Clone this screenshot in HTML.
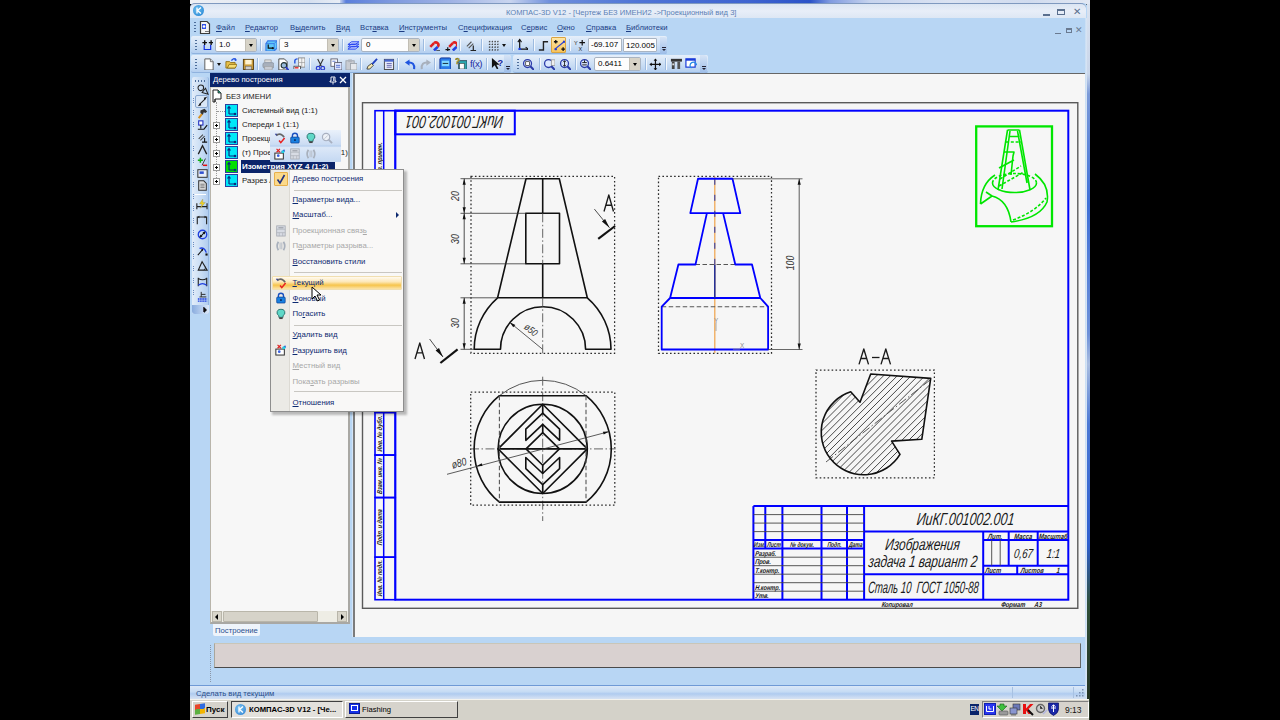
<!DOCTYPE html>
<html><head><meta charset="utf-8">
<style>
*{margin:0;padding:0;box-sizing:border-box}
html,body{width:1280px;height:720px;overflow:hidden;background:#000}
body{position:relative;font-family:"Liberation Sans",sans-serif;font-size:7.7px;color:#000}
.a{position:absolute}
.t{position:absolute;white-space:nowrap;line-height:1}
.tb{position:absolute;border-radius:2px;background:linear-gradient(#e6effa,#c9ddf4 60%,#b4cff0);border-bottom:1px solid #8fb2de}
.sep{position:absolute;width:2px;background:#9dbbe0;border-right:1px solid #f4f8fd}
.grip{position:absolute;width:2px;background:repeating-linear-gradient(#4d6d9a 0 1px,transparent 1px 3px)}
.combo{position:absolute;background:#fdfdfd;border:1px solid #a9b4c2;border-radius:2px}
.combo .btn{position:absolute;right:0;top:0;bottom:0;width:11px;background:#d7d3c7;border-left:1px solid #c2beb4}
.combo .btn:after{content:"";position:absolute;left:3px;top:5px;border:2.5px solid transparent;border-top:3px solid #000}
.menu{color:#1c3d84}
.ci{position:absolute;left:22px;white-space:nowrap;line-height:1;color:#0f2c72}
.cd{color:#a7a7a7}
.sepm{position:absolute;left:24px;right:4px;height:1px;background:#c5c5c5}
</style></head><body>
<!-- desktop strip top -->
<div class="a" style="left:190px;top:0;width:900px;height:4px;background:linear-gradient(90deg,#eef0f4 0px,#e4e9f2 60px,#d6e0f0 120px,#e8edf5 150px,#c8d4ee 150px,#5a7edc 156px,#7d98de 200px,#9fb2e4 260px,#c9d5ef 320px,#6f8fdc 360px,#4f74d6 450px,#3d63d0 560px,#2a52c8 620px,#7f9ae0 640px,#c7d4ee 680px,#dbe3f2 760px,#d0dbef 840px,#e2e8f3 900px)"></div>
<!-- window -->
<div class="a" style="left:190px;top:3px;width:898px;height:697px;background:#b8d6f4;border-radius:5px 5px 0 0"></div>
<!-- title bar -->
<div class="a" style="left:190px;top:3px;width:896px;height:15px;background:linear-gradient(#dbe5f3,#e8eef8 50%,#dde7f4);border-top:1px solid #7f99bf;border-radius:5px 5px 0 0"></div>
<div class="a" style="left:193px;top:5px;width:11px;height:11px;border-radius:50%;background:radial-gradient(circle at 40% 40%,#6fc0f0,#1d7ed0)"></div><svg class="a" style="left:193px;top:5px" width="11" height="11" viewBox="0 0 11 11"><path d="M4,2.5 V8.5 M8,2.5 L4.5,5.5 L8,8.5" stroke="#fff" stroke-width="1.3" fill="none"/></svg>
<div class="t" style="left:506px;top:8.5px;font-size:7.6px;color:#5b7fb5">КОМПАС-3D V12 - [Чертеж БЕЗ ИМЕНИ2 -&gt;Проекционный вид 3]</div>
<!-- right window border -->
<div class="a" style="left:1085px;top:18px;width:2px;height:681px;background:linear-gradient(90deg,#c6ddf5,#dbe6f3)"></div><div class="a" style="left:1087px;top:4px;width:3px;height:716px;background:linear-gradient(#d9e2f0 0,#c9d6ea 70px,#7b9ad8 90px,#3f6fd6 200px,#6d90d8 330px,#a9bde0 360px,#4b78d4 420px,#2f5fcf 540px,#30503a 600px,#1f2a1c 720px)"></div>
<!-- taskbar -->
<div class="a" style="left:190px;top:699px;width:899px;height:21px;background:#d4d2c9;border-top:1px solid #f4f3ee"></div>
<!-- menu bar -->
<div class="grip" style="left:194px;top:22px;height:12px"></div>
<svg class="a" style="left:199px;top:20px" width="12" height="15" viewBox="0 0 12 15"><path d="M1.5,1.5 H8 L10.5,4 V13.5 H1.5 Z" fill="#f4f4f4" stroke="#3a3a3a" stroke-width="1.2"/><path d="M3,4 H7 V9 H3 Z" fill="#3050e8"/><circle cx="5" cy="6.5" r="1.3" fill="#fff"/><path d="M6,11.5 H10" stroke="#777" stroke-width="1"/></svg>
<div class="t menu" style="left:216px;top:24px"><u>Ф</u>айл</div>
<div class="t menu" style="left:245px;top:24px"><u>Р</u>едактор</div>
<div class="t menu" style="left:290px;top:24px">В<u>ы</u>делить</div>
<div class="t menu" style="left:336px;top:24px"><u>В</u>ид</div>
<div class="t menu" style="left:360px;top:24px">Вст<u>а</u>вка</div>
<div class="t menu" style="left:399px;top:24px"><u>И</u>нструменты</div>
<div class="t menu" style="left:458px;top:24px">С<u>п</u>ецификация</div>
<div class="t menu" style="left:521px;top:24px">С<u>е</u>рвис</div>
<div class="t menu" style="left:557px;top:24px"><u>О</u>кно</div>
<div class="t menu" style="left:586px;top:24px"><u>С</u>правка</div>
<div class="t menu" style="left:626px;top:24px"><u>Б</u>иблиотеки</div>
<!-- title buttons -->
<div class="a" style="left:1043px;top:14px;width:7px;height:2px;background:#5a6f8e"></div>
<div class="a" style="left:1057px;top:9px;width:8px;height:6px;border:1px solid #5a6f8e;border-top-width:2px"></div>
<div class="t" style="left:1073px;top:7px;font-size:10px;color:#5a6f8e">✕</div>
<!-- mdi buttons -->
<div class="a" style="left:1055px;top:33px;width:6px;height:1px;background:#6a7a90"></div>
<div class="a" style="left:1066px;top:28px;width:6px;height:5px;border:1px solid #6a7a90;border-top-width:2px"></div>
<div class="t" style="left:1075px;top:26px;font-size:9px;color:#6a7a90">✕</div>
<!-- toolbar row 1 -->
<div class="tb" style="left:191px;top:36px;width:476px;height:18px"></div>
<div class="grip" style="left:195px;top:40px;height:11px"></div>
<div class="combo" style="left:215px;top:38px;width:42px;height:14px"><div class="btn"></div></div>
<div class="t" style="left:219px;top:41px;font-size:8px">1.0</div>
<div class="sep" style="left:260px;top:39px;height:12px"></div>
<div class="combo" style="left:279px;top:38px;width:60px;height:14px"><div class="btn"></div></div>
<div class="t" style="left:284px;top:41px;font-size:8px">3</div>
<div class="sep" style="left:342px;top:39px;height:12px"></div>
<div class="combo" style="left:361px;top:38px;width:59px;height:14px"><div class="btn"></div></div>
<div class="t" style="left:366px;top:41px;font-size:8px">0</div>
<div class="sep" style="left:423px;top:39px;height:12px"></div>
<div class="sep" style="left:459px;top:39px;height:12px"></div>
<div class="sep" style="left:481px;top:39px;height:12px"></div>
<div class="sep" style="left:512px;top:39px;height:12px"></div>
<div class="sep" style="left:533px;top:39px;height:12px"></div>
<div class="a" style="left:551px;top:37px;width:15px;height:16px;background:linear-gradient(#ffe7a8,#f8c45a);border:1px solid #d9a441;border-radius:1px"></div>
<div class="sep" style="left:569px;top:39px;height:12px"></div>
<div class="combo" style="left:588px;top:38px;width:34px;height:14px;border-radius:1px"></div>
<div class="t" style="left:591px;top:41px;font-size:8px">-69.107</div>
<div class="combo" style="left:623px;top:38px;width:34px;height:14px;border-radius:1px;overflow:hidden"><div class="t" style="left:2px;top:3px;font-size:8px">120.005</div></div>
<div class="a" style="left:660px;top:37px;width:7px;height:17px;background:linear-gradient(#d6e4f6,#9dbde8);border-radius:0 3px 3px 0"></div>
<!-- toolbar row 2 -->
<div class="tb" style="left:191px;top:55px;width:320px;height:18px"></div>
<div class="grip" style="left:195px;top:59px;height:11px"></div>
<div class="sep" style="left:257px;top:58px;height:12px"></div>
<div class="sep" style="left:309px;top:58px;height:12px"></div>
<div class="sep" style="left:360px;top:58px;height:12px"></div>
<div class="sep" style="left:397px;top:58px;height:12px"></div>
<div class="sep" style="left:434px;top:58px;height:12px"></div>
<div class="sep" style="left:486px;top:58px;height:12px"></div>
<div class="a" style="left:504px;top:55px;width:7px;height:18px;background:linear-gradient(#d6e4f6,#9dbde8);border-radius:0 3px 3px 0"></div>
<div class="tb" style="left:513px;top:55px;width:195px;height:18px"></div>
<div class="grip" style="left:517px;top:59px;height:11px"></div>
<div class="sep" style="left:539px;top:58px;height:12px"></div>
<div class="sep" style="left:575px;top:58px;height:12px"></div>
<div class="combo" style="left:594px;top:57px;width:47px;height:14px"><div class="btn"></div></div>
<div class="t" style="left:598px;top:60px;font-size:8px">0.6411</div>
<div class="sep" style="left:645px;top:58px;height:12px"></div>
<div class="sep" style="left:665px;top:58px;height:12px"></div>
<div class="a" style="left:700px;top:55px;width:7px;height:18px;background:linear-gradient(#d6e4f6,#9dbde8);border-radius:0 3px 3px 0"></div>
<!-- left vertical toolbar -->
<div class="a" style="left:192px;top:77px;width:17px;height:237px;border-radius:2px;background:linear-gradient(90deg,#e3edf9,#c7dcf4 60%,#b1cdef);border-right:1px solid #95b6e0"></div>
<div class="a" style="left:195px;top:80px;width:11px;height:2px;background:repeating-linear-gradient(90deg,#4d6d9a 0 1px,transparent 1px 3px)"></div>
<div class="a" style="left:195px;top:194px;width:11px;height:1px;background:#94b4dc;border-bottom:1px solid #fff"></div>
<div class="a" style="left:192px;top:305px;width:17px;height:9px;border-radius:0 0 2px 3px;background:linear-gradient(90deg,#8aacde,#b9d0ef 60%,#dde9f8)"></div>
<div class="a" style="left:202.5px;top:307px;width:1px;height:5px;background:#445"></div><div class="a" style="left:204px;top:306.5px;border:3px solid transparent;border-left:3.5px solid #111;border-right:0"></div>
<!-- tree panel -->
<div class="a" style="left:210px;top:73px;width:140px;height:13.5px;background:#0a246a"></div>
<div class="t" style="left:213px;top:76px;color:#fff">Дерево построения</div>
<svg class="a" style="left:329px;top:75.5px" width="8" height="9" viewBox="0 0 8 9"><path d="M2,1 H6 V5 H7 V6 H1 V5 H2 Z" stroke="#fff" stroke-width="0.9" fill="none"/><path d="M4,6 V8.5 M4.7,1.5 V5" stroke="#fff" stroke-width="0.9"/></svg>
<svg class="a" style="left:339px;top:75.5px" width="8" height="8" viewBox="0 0 8 8"><path d="M1,1 L7,7 M7,1 L1,7" stroke="#fff" stroke-width="1.3"/></svg>
<div class="a" style="left:210px;top:86.5px;width:140px;height:537px;background:#f7f7f7;border-right:2px solid #a9a8a4;border-bottom:2px solid #a9a8a4;border-left:1.5px solid #b9b5ab"></div>
<div class="a" style="left:211px;top:86.5px;width:137px;height:1.5px;background:#dedcd2"></div>
<!-- tree scrollbar -->
<div class="a" style="left:211px;top:611px;width:137px;height:11px;background:#eeede5"></div>
<div class="a" style="left:212px;top:611px;width:10px;height:11px;background:#d9d6cb;border:1px solid #b9b6aa"></div>
<div class="a" style="left:215px;top:613.5px;border:3px solid transparent;border-right:3px solid #000;border-left:0"></div>
<div class="a" style="left:223px;top:611px;width:95px;height:11px;background:#d6d3c9;border:1px solid #b9b6aa;border-radius:1px"></div>
<div class="a" style="left:337px;top:611px;width:10px;height:11px;background:#d9d6cb;border:1px solid #b9b6aa"></div>
<div class="a" style="left:341px;top:613.5px;border:3px solid transparent;border-left:3px solid #000;border-right:0"></div>
<!-- tab -->
<div class="a" style="left:213px;top:624px;width:47px;height:12px;background:#eef4fb;border-radius:0 0 2px 2px"></div>
<div class="t" style="left:215px;top:627px;color:#2b4f8d">Построение</div>
<!-- canvas -->
<div class="a" style="left:353px;top:73px;width:732px;height:564px;background:#f6f6f6;border-left:2px solid #7c7c7c;border-top:1px solid #666"></div>
<div class="a" style="left:352px;top:73px;width:1px;height:564px;background:#d3e4f7"></div>
<!-- bottom panel -->
<div class="grip" style="left:210px;top:645px;height:37px;width:1px;background:repeating-linear-gradient(#8a96a8 0 1px,transparent 1px 2px)"></div>
<div class="a" style="left:214px;top:643px;width:867px;height:25px;background:#d9d1d0;border-top:1px solid #c9c6b8;border-left:1px solid #a9a69c;border-bottom:1px solid #4a4a4a;border-right:1px solid #666"></div>
<!-- status bar -->
<div class="a" style="left:190px;top:685px;width:895px;height:14px;background:linear-gradient(#dbe8f8,#c5dbf4 45%,#afcbef 60%,#c9daf2 85%,#d6e2f2);border-top:1px solid #6f9ad6"></div>
<div class="a" style="left:1012px;top:687px;width:1px;height:11px;background:#a7c1e2"></div>
<div class="a" style="left:1073px;top:687px;width:1px;height:11px;background:#a7c1e2"></div>
<div class="t" style="left:196px;top:690px;color:#2a4d8a">Сделать вид текущим</div>
<!-- resize grip -->
<svg class="a" style="left:1076px;top:689px" width="9" height="9" viewBox="0 0 9 9"><g fill="#7d93b3"><rect x="6" y="0" width="1.5" height="1.5"/><rect x="3" y="3" width="1.5" height="1.5"/><rect x="6" y="3" width="1.5" height="1.5"/><rect x="0" y="6" width="1.5" height="1.5"/><rect x="3" y="6" width="1.5" height="1.5"/><rect x="6" y="6" width="1.5" height="1.5"/></g></svg>
<!-- start button -->
<div class="a" style="left:192px;top:701px;width:36px;height:17px;background:#d6d3cc;border:1px solid;border-color:#fff #404040 #404040 #fff"></div>
<div class="a" style="left:195px;top:704px;width:10px;height:10px;background:conic-gradient(#2f6be0 0 25%,#f2b400 0 50%,#5cb040 0 75%,#e8462a 0);transform:skewY(-8deg)"></div>
<div class="t" style="left:206px;top:706px;font-size:8px;font-weight:bold">Пуск</div>
<!-- task buttons -->
<div class="a" style="left:231px;top:701px;width:112px;height:17px;background:#e3e1dc;border:1px solid;border-color:#404040 #fff #fff #404040"></div>
<div class="a" style="left:235px;top:704px;width:11px;height:11px;border-radius:50%;background:radial-gradient(circle at 40% 40%,#7cc6f2,#2a7cd0)"></div><svg class="a" style="left:235px;top:704px" width="11" height="11" viewBox="0 0 11 11"><path d="M4,2.5 V8.5 M8,2.5 L4.5,5.5 L8,8.5" stroke="#fff" stroke-width="1.3" fill="none"/></svg>
<div class="t" style="left:249px;top:706px;font-size:7.7px;font-weight:bold">КОМПАС-3D V12 - [Че...</div>
<div class="a" style="left:345px;top:701px;width:113px;height:17px;background:#d6d3cc;border:1px solid;border-color:#fff #404040 #404040 #fff"></div>
<div class="a" style="left:349px;top:703px;width:11px;height:11px;background:#1530e8;border:1px solid #0a1a90"></div>
<div class="a" style="left:351px;top:705px;width:7px;height:6px;border:1px solid #fff"></div>
<div class="t" style="left:362px;top:706px;font-size:7.7px">Flashing</div>
<!-- tray -->
<div class="a" style="left:982px;top:701px;width:107px;height:17px;background:#d6d3cc;border:1px solid;border-color:#808080 #fff #fff #808080"></div>
<div class="a" style="left:970px;top:704px;width:9px;height:11px;background:#0a246a"></div>
<div class="t" style="left:970.5px;top:706px;font-size:6.5px;color:#fff;letter-spacing:-0.6px">EN</div>
<svg class="a" style="left:984px;top:703px" width="12" height="12" viewBox="0 0 12 12"><rect x="0.5" y="0.5" width="11" height="11" fill="#2a36f0" stroke="#1020b0"/><path d="M2.5,3 V8.5 H9.5 V3 M5,3 V6 H7.5" stroke="#fff" stroke-width="1" fill="none"/></svg>
<svg class="a" style="left:997px;top:703px" width="12" height="13" viewBox="0 0 12 13"><path d="M3,1 L7,1 L7,3 L10,3 L5,8 L0,3 L3,3 Z" fill="#3fc03f" stroke="#186018" stroke-width="0.6"/><rect x="2" y="8" width="9" height="4" rx="1" fill="#9a9a9a" stroke="#555" stroke-width="0.6"/></svg>
<svg class="a" style="left:1009px;top:703px" width="12" height="13" viewBox="0 0 12 13"><rect x="4" y="1" width="7" height="6" fill="#6b78b8" stroke="#333" stroke-width="0.6"/><rect x="1" y="5" width="7" height="6" fill="#8a96d0" stroke="#333" stroke-width="0.6"/><rect x="2" y="11" width="5" height="1.5" fill="#777"/></svg>
<svg class="a" style="left:1022px;top:703px" width="12" height="13" viewBox="0 0 12 13"><path d="M1,1 H4 V5.5 L8,1 H11.5 L6.5,6 L10,11 H6.5 L4,7.5 V11 H1 Z" fill="#e81010"/><path d="M6,7 L11,12" stroke="#111" stroke-width="2"/></svg>
<svg class="a" style="left:1035px;top:703px" width="13" height="13" viewBox="0 0 13 13"><circle cx="5.5" cy="5.5" r="4" fill="#ccc" stroke="#666" stroke-width="1.4"/><path d="M5.5,3 V5.5 H7.5" stroke="#444" stroke-width="1"/><path d="M8,11 L12,7" stroke="#b0b4e0" stroke-width="1.5"/></svg>
<svg class="a" style="left:1048px;top:702px" width="11" height="14" viewBox="0 0 11 14"><path d="M0.5,1 H10.5 V7 Q10.5,11 5.5,13.5 Q0.5,11 0.5,7 Z" fill="#1a28a8" stroke="#0a1060" stroke-width="0.7"/><path d="M5.5,3 V10 M3,6 H8 M3.5,4.5 L5.5,3 L7.5,4.5" stroke="#fff" stroke-width="1" fill="none"/></svg>
<div class="t" style="left:1065px;top:706px;font-size:8.5px;color:#111">9:13</div>
<svg class="a" style="left:0;top:0" width="1280" height="720" viewBox="0 0 1280 720">
<g shape-rendering="geometricPrecision">
<rect x="362.5" y="102.7" width="715.3" height="505.6" fill="none" stroke="#5a5a5a" stroke-width="1.4"/>
<g stroke="#0000ff" stroke-width="2.0" fill="none">
<rect x="395.3" y="110.7" width="673" height="489"/>
<rect x="375" y="110.7" width="20.3" height="102.1" stroke-width="1.6"/>
<line x1="383.7" y1="110.7" x2="383.7" y2="212.8" stroke-width="1.5"/>
<rect x="375" y="212.8" width="20.3" height="102.1" stroke-width="1.6"/>
<line x1="383.7" y1="212.8" x2="383.7" y2="314.9" stroke-width="1.5"/>
<rect x="375" y="557.2" width="20.3" height="42.5" stroke-width="1.6"/>
<line x1="383.7" y1="557.2" x2="383.7" y2="599.7" stroke-width="1.5"/>
<rect x="375" y="497.6" width="20.3" height="59.6" stroke-width="1.6"/>
<line x1="383.7" y1="497.6" x2="383.7" y2="557.2" stroke-width="1.5"/>
<rect x="375" y="455.0" width="20.3" height="42.5" stroke-width="1.6"/>
<line x1="383.7" y1="455.0" x2="383.7" y2="497.6" stroke-width="1.5"/>
<rect x="375" y="412.5" width="20.3" height="42.6" stroke-width="1.6"/>
<line x1="383.7" y1="412.5" x2="383.7" y2="455.0" stroke-width="1.5"/>
<rect x="375" y="352.9" width="20.3" height="59.6" stroke-width="1.6"/>
<line x1="383.7" y1="352.9" x2="383.7" y2="412.5" stroke-width="1.5"/>
<rect x="395.3" y="110.7" width="119.5" height="23.6"/>
<line x1="753.4" y1="506.1" x2="1068.3" y2="506.1"/>
<line x1="753.4" y1="506.1" x2="753.4" y2="599.7"/>
<line x1="765.3" y1="506.1" x2="765.3" y2="548.6"/>
<line x1="782.4" y1="506.1" x2="782.4" y2="599.7"/>
<line x1="821.5" y1="506.1" x2="821.5" y2="599.7"/>
<line x1="847.0" y1="506.1" x2="847.0" y2="599.7"/>
<line x1="864.1" y1="506.1" x2="864.1" y2="599.7"/>
<line x1="753.4" y1="540.1" x2="864.1" y2="540.1"/>
<line x1="753.4" y1="548.6" x2="864.1" y2="548.6"/>
<line x1="864.1" y1="531.6" x2="1068.3" y2="531.6"/>
<line x1="864.1" y1="574.2" x2="1068.3" y2="574.2"/>
<line x1="983.2" y1="531.6" x2="983.2" y2="599.7"/>
<line x1="983.2" y1="540.1" x2="1068.3" y2="540.1"/>
<line x1="983.2" y1="565.7" x2="1068.3" y2="565.7"/>
<line x1="1008.7" y1="531.6" x2="1008.7" y2="565.7"/>
<line x1="1037.7" y1="531.6" x2="1037.7" y2="565.7"/>
<line x1="1017.2" y1="565.7" x2="1017.2" y2="574.2"/>
</g>
<g stroke="#444" stroke-width="0.9">
<line x1="753.4" y1="514.6" x2="864.1" y2="514.6"/>
<line x1="753.4" y1="523.1" x2="864.1" y2="523.1"/>
<line x1="753.4" y1="531.6" x2="864.1" y2="531.6"/>
<line x1="753.4" y1="557.2" x2="864.1" y2="557.2"/>
<line x1="753.4" y1="565.7" x2="864.1" y2="565.7"/>
<line x1="753.4" y1="574.2" x2="864.1" y2="574.2"/>
<line x1="753.4" y1="582.7" x2="864.1" y2="582.7"/>
<line x1="753.4" y1="591.2" x2="864.1" y2="591.2"/>
<line x1="991.7" y1="540.1" x2="991.7" y2="565.7"/>
<line x1="1000.2" y1="540.1" x2="1000.2" y2="565.7"/>
</g>
<text transform="translate(965.0,525.2) rotate(0) scale(0.71,1) skewX(-9)" font-size="17.5" fill="#1a1a1a" text-anchor="middle" font-family="Liberation Sans" font-style="italic" font-weight="normal">ИиКГ.001002.001</text>
<text transform="translate(922.0,549.6) rotate(0) scale(0.72,1) skewX(-9)" font-size="16.5" fill="#1a1a1a" text-anchor="middle" font-family="Liberation Sans" font-style="italic" font-weight="normal">Изображения</text>
<text transform="translate(922.5,567.2) rotate(0) scale(0.72,1) skewX(-9)" font-size="16.5" fill="#1a1a1a" text-anchor="middle" font-family="Liberation Sans" font-style="italic" font-weight="normal">задача 1 вариант 2</text>
<text transform="translate(923.0,593.3) rotate(0) scale(0.575,1) skewX(-9)" font-size="16.5" fill="#1a1a1a" text-anchor="middle" font-family="Liberation Sans" font-style="italic" font-weight="normal">Сталь 10&#160;&#160;ГОСТ 1050-88</text>
<text transform="translate(1023.0,557.5) rotate(0) scale(0.75,1) skewX(-9)" font-size="13" fill="#1a1a1a" text-anchor="middle" font-family="Liberation Sans" font-style="italic" font-weight="normal">0,67</text>
<text transform="translate(1053.0,557.5) rotate(0) scale(0.75,1) skewX(-9)" font-size="13" fill="#1a1a1a" text-anchor="middle" font-family="Liberation Sans" font-style="italic" font-weight="normal">1:1</text>
<text transform="translate(995.0,538.8) rotate(0) scale(0.78,1) skewX(-9)" font-size="7.5" fill="#1a1a1a" text-anchor="middle" font-family="Liberation Sans" font-style="italic" font-weight="bold">Лит.</text>
<text transform="translate(1023.0,538.8) rotate(0) scale(0.78,1) skewX(-9)" font-size="7.5" fill="#1a1a1a" text-anchor="middle" font-family="Liberation Sans" font-style="italic" font-weight="bold">Масса</text>
<text transform="translate(1053.0,538.8) rotate(0) scale(0.78,1) skewX(-9)" font-size="7.5" fill="#1a1a1a" text-anchor="middle" font-family="Liberation Sans" font-style="italic" font-weight="bold">Масштаб</text>
<text transform="translate(993.0,572.5) rotate(0) scale(0.78,1) skewX(-9)" font-size="7.5" fill="#1a1a1a" text-anchor="middle" font-family="Liberation Sans" font-style="italic" font-weight="bold">Лист</text>
<text transform="translate(1032.0,572.5) rotate(0) scale(0.78,1) skewX(-9)" font-size="7.5" fill="#1a1a1a" text-anchor="middle" font-family="Liberation Sans" font-style="italic" font-weight="bold">Листов</text>
<text transform="translate(1058.0,572.5) rotate(0) scale(0.8,1) skewX(-9)" font-size="7.5" fill="#1a1a1a" text-anchor="middle" font-family="Liberation Sans" font-style="italic" font-weight="bold">1</text>
<text transform="translate(897.0,607.0) rotate(0) scale(0.8,1) skewX(-9)" font-size="7.2" fill="#1a1a1a" text-anchor="middle" font-family="Liberation Sans" font-style="italic" font-weight="bold">Копировал</text>
<text transform="translate(1013.0,607.0) rotate(0) scale(0.8,1) skewX(-9)" font-size="7.2" fill="#1a1a1a" text-anchor="middle" font-family="Liberation Sans" font-style="italic" font-weight="bold">Формат</text>
<text transform="translate(1038.0,607.0) rotate(0) scale(0.8,1) skewX(-9)" font-size="7.2" fill="#1a1a1a" text-anchor="middle" font-family="Liberation Sans" font-style="italic" font-weight="bold">А3</text>
<text transform="translate(759.4,547.1) rotate(0) scale(0.72,1) skewX(-9)" font-size="7" fill="#1a1a1a" text-anchor="middle" font-family="Liberation Sans" font-style="italic" font-weight="bold">Изм.</text>
<text transform="translate(773.9,547.1) rotate(0) scale(0.72,1) skewX(-9)" font-size="7" fill="#1a1a1a" text-anchor="middle" font-family="Liberation Sans" font-style="italic" font-weight="bold">Лист</text>
<text transform="translate(801.9,547.1) rotate(0) scale(0.72,1) skewX(-9)" font-size="7" fill="#1a1a1a" text-anchor="middle" font-family="Liberation Sans" font-style="italic" font-weight="bold">№ докум.</text>
<text transform="translate(834.3,547.1) rotate(0) scale(0.72,1) skewX(-9)" font-size="7" fill="#1a1a1a" text-anchor="middle" font-family="Liberation Sans" font-style="italic" font-weight="bold">Подп.</text>
<text transform="translate(855.5,547.1) rotate(0) scale(0.72,1) skewX(-9)" font-size="7" fill="#1a1a1a" text-anchor="middle" font-family="Liberation Sans" font-style="italic" font-weight="bold">Дата</text>
<text transform="translate(754.9,555.7) rotate(0) scale(0.8,1) skewX(-9)" font-size="7" fill="#1a1a1a" text-anchor="start" font-family="Liberation Sans" font-style="italic" font-weight="bold">Разраб.</text>
<text transform="translate(754.9,564.2) rotate(0) scale(0.8,1) skewX(-9)" font-size="7" fill="#1a1a1a" text-anchor="start" font-family="Liberation Sans" font-style="italic" font-weight="bold">Пров.</text>
<text transform="translate(754.9,572.7) rotate(0) scale(0.8,1) skewX(-9)" font-size="7" fill="#1a1a1a" text-anchor="start" font-family="Liberation Sans" font-style="italic" font-weight="bold">Т.контр.</text>
<text transform="translate(754.9,589.7) rotate(0) scale(0.8,1) skewX(-9)" font-size="7" fill="#1a1a1a" text-anchor="start" font-family="Liberation Sans" font-style="italic" font-weight="bold">Н.контр.</text>
<text transform="translate(754.9,598.2) rotate(0) scale(0.8,1) skewX(-9)" font-size="7" fill="#1a1a1a" text-anchor="start" font-family="Liberation Sans" font-style="italic" font-weight="bold">Утв.</text>
<text transform="translate(455.0,116.0) rotate(180) scale(0.71,1) skewX(-9)" font-size="17.5" fill="#1a1a1a" text-anchor="middle" font-family="Liberation Sans" font-style="italic" font-weight="normal">ИиКГ.001002.001</text>
<text transform="translate(381.8,161.8) rotate(-90) scale(0.78,1) skewX(-9)" font-size="7" fill="#1a1a1a" text-anchor="middle" font-family="Liberation Sans" font-style="italic" font-weight="bold">Перв. примен.</text>
<text transform="translate(381.8,263.9) rotate(-90) scale(0.78,1) skewX(-9)" font-size="7" fill="#1a1a1a" text-anchor="middle" font-family="Liberation Sans" font-style="italic" font-weight="bold">Справ. №</text>
<text transform="translate(381.8,578.4) rotate(-90) scale(0.78,1) skewX(-9)" font-size="7" fill="#1a1a1a" text-anchor="middle" font-family="Liberation Sans" font-style="italic" font-weight="bold">Инв. № подл.</text>
<text transform="translate(381.8,527.4) rotate(-90) scale(0.78,1) skewX(-9)" font-size="7" fill="#1a1a1a" text-anchor="middle" font-family="Liberation Sans" font-style="italic" font-weight="bold">Подп. и дата</text>
<text transform="translate(381.8,476.3) rotate(-90) scale(0.78,1) skewX(-9)" font-size="7" fill="#1a1a1a" text-anchor="middle" font-family="Liberation Sans" font-style="italic" font-weight="bold">Взам. инв. №</text>
<text transform="translate(381.8,433.8) rotate(-90) scale(0.78,1) skewX(-9)" font-size="7" fill="#1a1a1a" text-anchor="middle" font-family="Liberation Sans" font-style="italic" font-weight="bold">Инв. № дубл.</text>
<text transform="translate(381.8,382.7) rotate(-90) scale(0.78,1) skewX(-9)" font-size="7" fill="#1a1a1a" text-anchor="middle" font-family="Liberation Sans" font-style="italic" font-weight="bold">Подп. и дата</text>
<rect x="471" y="176.3" width="143.6" height="177.0" fill="none" stroke="#2a2a2a" stroke-width="1.25" stroke-dasharray="1.6 2.3"/>
<g stroke="#111" stroke-width="1.6" fill="none" stroke-linejoin="round">
<polygon points="526,178.7 559.3,178.7 587.3,297.8 497.6,297.8"/>
<rect x="525.8" y="213.3" width="33.7" height="50.5"/>
<path d="M497.6,297.8 A68.4,68.4 0 0 0 474.2,349.3 L500.5,349.3 A42.55,42.55 0 0 1 585.6,349.3 L611,349.3 A68.4,68.4 0 0 0 587.3,297.8"/>
</g>
<line x1="542.7" y1="178.7" x2="542.7" y2="213.3" stroke="#111" stroke-width="1.6" />
<line x1="542.7" y1="263.8" x2="542.7" y2="297.8" stroke="#111" stroke-width="1.6" />
<line x1="542.7" y1="213.3" x2="542.7" y2="263.8" stroke="#555" stroke-width="0.9" stroke-dasharray="9 2.5 1.5 2.5"/>
<line x1="542.7" y1="297.8" x2="542.7" y2="354.0" stroke="#555" stroke-width="0.9" stroke-dasharray="9 2.5 1.5 2.5"/>
<line x1="460.5" y1="178.7" x2="526.0" y2="178.7" stroke="#333" stroke-width="0.8" />
<line x1="460.5" y1="213.3" x2="525.8" y2="213.3" stroke="#333" stroke-width="0.8" />
<line x1="460.5" y1="263.8" x2="525.8" y2="263.8" stroke="#333" stroke-width="0.8" />
<line x1="460.5" y1="297.8" x2="497.6" y2="297.8" stroke="#333" stroke-width="0.8" />
<line x1="460.5" y1="349.3" x2="474.2" y2="349.3" stroke="#333" stroke-width="0.8" />
<line x1="464.2" y1="178.7" x2="464.2" y2="213.3" stroke="#222" stroke-width="0.8" />
<polygon points="464.2,178.7 465.8,184.7 462.6,184.7" fill="#111"/>
<polygon points="464.2,213.3 462.6,207.3 465.8,207.3" fill="#111"/>
<line x1="464.2" y1="213.3" x2="464.2" y2="263.8" stroke="#222" stroke-width="0.8" />
<polygon points="464.2,213.3 465.8,219.3 462.6,219.3" fill="#111"/>
<polygon points="464.2,263.8 462.6,257.8 465.8,257.8" fill="#111"/>
<line x1="464.2" y1="297.8" x2="464.2" y2="349.3" stroke="#222" stroke-width="0.8" />
<polygon points="464.2,297.8 465.8,303.8 462.6,303.8" fill="#111"/>
<polygon points="464.2,349.3 462.6,343.3 465.8,343.3" fill="#111"/>
<text transform="translate(455.0,196.0) rotate(-90) scale(0.8,1)" font-size="11" fill="#333" text-anchor="middle" dominant-baseline="central" font-family="Liberation Sans" font-style="italic">20</text>
<text transform="translate(455.0,239.0) rotate(-90) scale(0.8,1)" font-size="11" fill="#333" text-anchor="middle" dominant-baseline="central" font-family="Liberation Sans" font-style="italic">30</text>
<text transform="translate(455.0,323.0) rotate(-90) scale(0.8,1)" font-size="11" fill="#333" text-anchor="middle" dominant-baseline="central" font-family="Liberation Sans" font-style="italic">30</text>
<line x1="542.6" y1="349.3" x2="509.7" y2="322.3" stroke="#333" stroke-width="0.8" />
<polygon points="509.7,322.3 515.4,324.9 513.3,327.3" fill="#111"/>
<text transform="translate(531.0,330.0) rotate(40) scale(0.8,1)" font-size="10" fill="#333" text-anchor="middle" dominant-baseline="central" font-family="Liberation Sans" font-style="italic">ø50</text>
<path d="M604.0,211.5 L608.8,195.0 L613.5,211.5 M605.8,205.2 H611.7" stroke="#1a1a1a" stroke-width="1.35" fill="none" stroke-linejoin="round"/>
<line x1="594.4" y1="209.1" x2="609.5" y2="227.7" stroke="#222" stroke-width="0.8" />
<polygon points="609.5,227.7 601.9,221.6 605.1,219.0" fill="#111"/>
<line x1="598.2" y1="238.9" x2="615.1" y2="226.0" stroke="#111" stroke-width="2.2" />
<path d="M415.0,359.0 L419.8,343.0 L424.5,359.0 M416.8,352.9 H422.7" stroke="#1a1a1a" stroke-width="1.35" fill="none" stroke-linejoin="round"/>
<line x1="429.6" y1="339.0" x2="443.0" y2="357.0" stroke="#222" stroke-width="0.8" />
<polygon points="443.0,357.0 435.6,350.6 439.0,348.1" fill="#111"/>
<line x1="440.4" y1="363.0" x2="457.6" y2="349.3" stroke="#111" stroke-width="2.2" />
<rect x="658.5" y="176.3" width="113.0" height="177.1" fill="none" stroke="#2a2a2a" stroke-width="1.25" stroke-dasharray="1.6 2.3"/>
<line x1="714.8" y1="176.5" x2="714.8" y2="353.0" stroke="#f0a34a" stroke-width="1.2" />
<line x1="695.5" y1="264.5" x2="735.3" y2="264.5" stroke="#555" stroke-width="1.1" stroke-dasharray="4.5 2.5"/>
<line x1="661.7" y1="306.7" x2="768.1" y2="306.7" stroke="#555" stroke-width="1.1" stroke-dasharray="4.5 2.5"/>
<g stroke="#0000ff" stroke-width="1.8" fill="none" stroke-linejoin="round">
<polygon points="698,178.75 732.5,178.75 740.3,213.1 690.3,213.1"/>
<path d="M706.9,213.1 L695.5,264.5 L678.4,264.5 L670.1,298 L661.7,306.7 L661.7,349.5 L768.1,349.5 L768.1,306.7 L760.3,298 L752,264.5 L735.3,264.5 L723.1,213.1"/>
<line x1="670.1" y1="298" x2="760.3" y2="298"/>
</g>
<line x1="714.8" y1="264.5" x2="714.8" y2="298.0" stroke="#1a2a9a" stroke-width="1.5" />
<line x1="714.8" y1="178.8" x2="714.8" y2="264.5" stroke="#2233aa" stroke-width="1.0" stroke-dasharray="6 10"/>
<line x1="732.5" y1="178.8" x2="802.5" y2="178.8" stroke="#444" stroke-width="0.8" />
<line x1="768.1" y1="349.5" x2="802.5" y2="349.5" stroke="#444" stroke-width="0.8" />
<line x1="799.2" y1="178.8" x2="799.2" y2="349.5" stroke="#333" stroke-width="0.8" />
<polygon points="799.2,178.8 800.8,184.8 797.6,184.8" fill="#111"/>
<polygon points="799.2,349.5 797.6,343.5 800.8,343.5" fill="#111"/>
<text transform="translate(790.0,263.0) rotate(-90) scale(0.8,1)" font-size="11" fill="#333" text-anchor="middle" dominant-baseline="central" font-family="Liberation Sans" font-style="italic">100</text>
<text transform="translate(716.0,320.0) rotate(0) scale(0.9,1)" font-size="7" fill="#888" text-anchor="middle" dominant-baseline="central" font-family="Liberation Sans" >Y</text>
<line x1="716.0" y1="323.0" x2="716.0" y2="331.0" stroke="#999" stroke-width="0.8" />
<text transform="translate(742.0,345.0) rotate(0) scale(0.9,1)" font-size="7" fill="#888" text-anchor="middle" dominant-baseline="central" font-family="Liberation Sans" >X</text>
<line x1="733.0" y1="349.0" x2="740.0" y2="349.0" stroke="#999" stroke-width="0.8" />
<rect x="470.7" y="392.2" width="144.1" height="113.0" fill="none" stroke="#2a2a2a" stroke-width="1.25" stroke-dasharray="1.6 2.3"/>
<line x1="542.7" y1="376.7" x2="542.7" y2="521.0" stroke="#555" stroke-width="0.9" stroke-dasharray="9 2.5 1.5 2.5"/>
<line x1="470.0" y1="448.9" x2="615.6" y2="448.9" stroke="#555" stroke-width="0.9" stroke-dasharray="9 2.5 1.5 2.5"/>
<path d="M499.4,395.7 A68.6,68.6 0 0 1 586.0,395.7" stroke="#555" stroke-width="1" fill="none"/>
<g stroke="#111" stroke-width="1.6" fill="none" stroke-linejoin="round">
<path d="M499.4,395.7 A68.6,68.6 0 0 0 499.4,502.1 L586.0,502.1 A68.6,68.6 0 0 0 586.0,395.7 Z"/>
<circle cx="542.7" cy="448.9" r="44.6"/>
<polygon points="542.7,404.29999999999995 587.3000000000001,448.9 542.7,493.5 498.1,448.9"/>
<line x1="498.1" y1="448.9" x2="587.3000000000001" y2="448.9"/>
<path d="M525.8,440.3 L525.8,429.2 L542.7,413.2 L559.6,429.2 L559.6,440.3 L542.7,424.3 Z"/>
<line x1="542.7" y1="404.3" x2="542.7" y2="413.2"/>
<line x1="542.7" y1="424.3" x2="542.7" y2="432.6"/>
<path d="M525.8,457.5 L525.8,468.6 L542.7,484.6 L559.6,468.6 L559.6,457.5 L542.7,473.5 Z"/>
<line x1="542.7" y1="493.5" x2="542.7" y2="484.6"/>
<line x1="542.7" y1="473.5" x2="542.7" y2="465.2"/>
<polygon points="542.7,432.59999999999997 559.4000000000001,448.9 542.7,465.2 526.0,448.9"/>
</g>
<line x1="499.4" y1="395.7" x2="499.4" y2="502.1" stroke="#555" stroke-width="1.1" stroke-dasharray="4.5 2.5"/>
<line x1="586.0" y1="395.7" x2="586.0" y2="502.1" stroke="#555" stroke-width="1.1" stroke-dasharray="4.5 2.5"/>
<line x1="447.0" y1="474.3" x2="609.1" y2="431.6" stroke="#333" stroke-width="0.8" />
<polygon points="476.3,466.2 481.7,463.2 482.5,466.1" fill="#111"/>
<polygon points="609.1,431.6 603.7,434.6 602.9,431.7" fill="#111"/>
<text transform="translate(459.0,463.0) rotate(-15) scale(0.8,1)" font-size="11" fill="#333" text-anchor="middle" dominant-baseline="central" font-family="Liberation Sans" font-style="italic">ø80</text>
<path d="M859.0,364.4 L863.8,349.0 L868.5,364.4 M860.8,358.5 H866.7" stroke="#1a1a1a" stroke-width="1.35" fill="none" stroke-linejoin="round"/>
<line x1="872.0" y1="357.5" x2="879.5" y2="357.5" stroke="#1a1a1a" stroke-width="1.3" />
<path d="M881.0,364.4 L885.8,349.0 L890.5,364.4 M882.8,358.5 H888.7" stroke="#1a1a1a" stroke-width="1.35" fill="none" stroke-linejoin="round"/>
<rect x="816" y="370" width="118.4" height="107.8" fill="none" stroke="#2a2a2a" stroke-width="1.25" stroke-dasharray="1.6 2.3"/>
<clipPath id="secclip"><path d="M870.7,374 L930.7,378.4 L921.8,439.3 L891.6,441.1 L900,454.4 A42.5,42.5 0 1 1 850.7,391.8 L860,402.2 Z"/></clipPath>
<g clip-path="url(#secclip)" stroke="#2a2a2a" stroke-width="0.85">
<line x1="573.0" y1="500" x2="733.0" y2="340"/>
<line x1="579.9" y1="500" x2="739.9" y2="340"/>
<line x1="586.8" y1="500" x2="746.8" y2="340"/>
<line x1="593.7" y1="500" x2="753.7" y2="340"/>
<line x1="600.6" y1="500" x2="760.6" y2="340"/>
<line x1="607.5" y1="500" x2="767.5" y2="340"/>
<line x1="614.4" y1="500" x2="774.4" y2="340"/>
<line x1="621.3" y1="500" x2="781.3" y2="340"/>
<line x1="628.2" y1="500" x2="788.2" y2="340"/>
<line x1="635.1" y1="500" x2="795.1" y2="340"/>
<line x1="642.0" y1="500" x2="802.0" y2="340"/>
<line x1="648.9" y1="500" x2="808.9" y2="340"/>
<line x1="655.8" y1="500" x2="815.8" y2="340"/>
<line x1="662.7" y1="500" x2="822.7" y2="340"/>
<line x1="669.6" y1="500" x2="829.6" y2="340"/>
<line x1="676.5" y1="500" x2="836.5" y2="340"/>
<line x1="683.4" y1="500" x2="843.4" y2="340"/>
<line x1="690.3" y1="500" x2="850.3" y2="340"/>
<line x1="697.2" y1="500" x2="857.2" y2="340"/>
<line x1="704.1" y1="500" x2="864.1" y2="340"/>
<line x1="711.0" y1="500" x2="871.0" y2="340"/>
<line x1="717.9" y1="500" x2="877.9" y2="340"/>
<line x1="724.8" y1="500" x2="884.8" y2="340"/>
<line x1="731.7" y1="500" x2="891.7" y2="340"/>
<line x1="738.6" y1="500" x2="898.6" y2="340"/>
<line x1="745.5" y1="500" x2="905.5" y2="340"/>
<line x1="752.4" y1="500" x2="912.4" y2="340"/>
<line x1="759.3" y1="500" x2="919.3" y2="340"/>
<line x1="766.2" y1="500" x2="926.2" y2="340"/>
<line x1="773.1" y1="500" x2="933.1" y2="340"/>
<line x1="780.0" y1="500" x2="940.0" y2="340"/>
<line x1="786.9" y1="500" x2="946.9" y2="340"/>
<line x1="793.8" y1="500" x2="953.8" y2="340"/>
<line x1="800.7" y1="500" x2="960.7" y2="340"/>
<line x1="807.6" y1="500" x2="967.6" y2="340"/>
<line x1="814.5" y1="500" x2="974.5" y2="340"/>
<line x1="821.4" y1="500" x2="981.4" y2="340"/>
<line x1="828.3" y1="500" x2="988.3" y2="340"/>
<line x1="835.2" y1="500" x2="995.2" y2="340"/>
<line x1="842.1" y1="500" x2="1002.1" y2="340"/>
<line x1="849.0" y1="500" x2="1009.0" y2="340"/>
<line x1="855.9" y1="500" x2="1015.9" y2="340"/>
<line x1="862.8" y1="500" x2="1022.8" y2="340"/>
<line x1="869.7" y1="500" x2="1029.7" y2="340"/>
<line x1="876.6" y1="500" x2="1036.6" y2="340"/>
<line x1="883.5" y1="500" x2="1043.5" y2="340"/>
<line x1="890.4" y1="500" x2="1050.4" y2="340"/>
<line x1="897.3" y1="500" x2="1057.3" y2="340"/>
<line x1="904.2" y1="500" x2="1064.2" y2="340"/>
<line x1="911.1" y1="500" x2="1071.1" y2="340"/>
<line x1="918.0" y1="500" x2="1078.0" y2="340"/>
<line x1="924.9" y1="500" x2="1084.9" y2="340"/>
<line x1="931.8" y1="500" x2="1091.8" y2="340"/>
<line x1="938.7" y1="500" x2="1098.7" y2="340"/>
<line x1="945.6" y1="500" x2="1105.6" y2="340"/>
<line x1="952.5" y1="500" x2="1112.5" y2="340"/>
<line x1="959.4" y1="500" x2="1119.4" y2="340"/>
<line x1="966.3" y1="500" x2="1126.3" y2="340"/>
<line x1="973.2" y1="500" x2="1133.2" y2="340"/>
<line x1="980.1" y1="500" x2="1140.1" y2="340"/>
<line x1="987.0" y1="500" x2="1147.0" y2="340"/>
<line x1="993.9" y1="500" x2="1153.9" y2="340"/>
<line x1="1000.8" y1="500" x2="1160.8" y2="340"/>
<line x1="1007.7" y1="500" x2="1167.7" y2="340"/>
<line x1="1014.6" y1="500" x2="1174.6" y2="340"/>
<line x1="1021.5" y1="500" x2="1181.5" y2="340"/>
<line x1="1028.4" y1="500" x2="1188.4" y2="340"/>
<line x1="1035.3" y1="500" x2="1195.3" y2="340"/>
<line x1="1042.2" y1="500" x2="1202.2" y2="340"/>
<line x1="1049.1" y1="500" x2="1209.1" y2="340"/>
<line x1="1056.0" y1="500" x2="1216.0" y2="340"/>
<line x1="1062.9" y1="500" x2="1222.9" y2="340"/>
<line x1="1069.8" y1="500" x2="1229.8" y2="340"/>
<line x1="1076.7" y1="500" x2="1236.7" y2="340"/>
<line x1="1083.6" y1="500" x2="1243.6" y2="340"/>
<line x1="1090.5" y1="500" x2="1250.5" y2="340"/>
<line x1="1097.4" y1="500" x2="1257.4" y2="340"/>
<line x1="1104.3" y1="500" x2="1264.3" y2="340"/>
<line x1="1111.2" y1="500" x2="1271.2" y2="340"/>
<line x1="1118.1" y1="500" x2="1278.1" y2="340"/>
<line x1="1125.0" y1="500" x2="1285.0" y2="340"/>
<line x1="1131.9" y1="500" x2="1291.9" y2="340"/>
<line x1="1138.8" y1="500" x2="1298.8" y2="340"/>
<line x1="1145.7" y1="500" x2="1305.7" y2="340"/>
<line x1="1152.6" y1="500" x2="1312.6" y2="340"/>
<line x1="1159.5" y1="500" x2="1319.5" y2="340"/>
<line x1="1166.4" y1="500" x2="1326.4" y2="340"/>
<line x1="1173.3" y1="500" x2="1333.3" y2="340"/>
<line x1="1180.2" y1="500" x2="1340.2" y2="340"/>
<line x1="1187.1" y1="500" x2="1347.1" y2="340"/>
</g>
<line x1="826.0" y1="462.0" x2="930.0" y2="380.0" stroke="#444" stroke-width="0.9" stroke-dasharray="9 2.5 1.5 2.5"/>
<path d="M870.7,374 L930.7,378.4 L921.8,439.3 L891.6,441.1 L900,454.4 A42.5,42.5 0 1 1 850.7,391.8 L860,402.2 Z" stroke="#111" stroke-width="1.6" fill="none" stroke-linejoin="round"/>
<rect x="976.2" y="126.4" width="75.8" height="99.8" fill="none" stroke="#00e600" stroke-width="2.3"/>
<g stroke="#00e600" stroke-width="1.6" fill="none" stroke-linejoin="round">
<path d="M1007.5,130 H1019.5 M1008.5,136.5 H1019.5 M1007.5,130 L998,190 M1010,131 L1002,189 M1019.5,130 L1030,190 M1017.5,131 L1027,183"/>
<path d="M1004,152 H1014 L1013,156 L1011,175 M999,168 L1014,160"/>
<path d="M992.5,183 A22,9.5 0 0 0 1036.5,183 M1035,174 Q1050,185 1047,202 Q1040,218 1011,222 M980.5,204 Q981,184 995,175 M980.5,204 L992,196 L986,192 M992,196 Q1008,200 1011,222"/>
<path d="M992.5,183 A22,9.5 0 0 1 1036.5,183 M1006,142 H1021 M999,186 L1024,172 M1000,179 L1021,166 M1013,220 Q1035,212 1046,198" stroke-dasharray="3 1.8"/>
</g>
</g></svg>
<!-- tree items -->
<svg class="a" style="left:212px;top:89px" width="10" height="14" viewBox="0 0 10 14"><path d="M1,1 H6 L9,4 V10 H3 V13 H1 Z M3,10 V13" fill="#fff" stroke="#222" stroke-width="1"/><path d="M6,1 V4 H9" fill="#2a8" stroke="#222" stroke-width="0.8"/></svg>
<div class="t" style="left:226px;top:93px;color:#222">БЕЗ ИМЕНИ</div>
<div class="a" style="left:216px;top:102px;width:0;height:80px;border-left:1px dotted #999"></div>
<div class="a" style="left:217px;top:111px;width:8px;height:0;border-top:1px dotted #999"></div>
<div class="a" style="left:225px;top:104px;width:13px;height:13px;background:#00e8f8;border:1px solid #2a3fa0"></div>
<svg class="a" style="left:226px;top:105px" width="11" height="11" viewBox="0 0 11 11"><path d="M3,9 V2 M1.5,3.5 L3,1.5 L4.5,3.5 M3,9 H9" stroke="#0a2a80" stroke-width="1.2" fill="none"/><circle cx="9" cy="9" r="1.3" fill="#0a2a80"/></svg>
<div class="t" style="left:242px;top:107px;color:#1a1a1a;font-size:7.9px">Системный вид (1:1)</div>
<div class="a" style="left:213px;top:122px;width:7px;height:7px;background:#fff;border:1px solid #999"></div>
<div class="a" style="left:215px;top:125px;width:3px;height:1px;background:#000"></div>
<div class="a" style="left:216px;top:124px;width:1px;height:3px;background:#000"></div>
<div class="a" style="left:225px;top:118px;width:13px;height:13px;background:#00e8f8;border:1px solid #2a3fa0"></div>
<svg class="a" style="left:226px;top:119px" width="11" height="11" viewBox="0 0 11 11"><path d="M3,9 V2 M1.5,3.5 L3,1.5 L4.5,3.5 M3,9 H9" stroke="#0a2a80" stroke-width="1.2" fill="none"/><circle cx="9" cy="9" r="1.3" fill="#0a2a80"/></svg>
<div class="t" style="left:242px;top:121px;color:#1a1a1a;font-size:7.9px">Спереди 1 (1:1)</div>
<div class="a" style="left:213px;top:136px;width:7px;height:7px;background:#fff;border:1px solid #999"></div>
<div class="a" style="left:215px;top:139px;width:3px;height:1px;background:#000"></div>
<div class="a" style="left:216px;top:138px;width:1px;height:3px;background:#000"></div>
<div class="a" style="left:225px;top:132px;width:13px;height:13px;background:#00e8f8;border:1px solid #2a3fa0"></div>
<svg class="a" style="left:226px;top:133px" width="11" height="11" viewBox="0 0 11 11"><path d="M3,9 V2 M1.5,3.5 L3,1.5 L4.5,3.5 M3,9 H9" stroke="#0a2a80" stroke-width="1.2" fill="none"/><circle cx="9" cy="9" r="1.3" fill="#0a2a80"/></svg>
<div class="t" style="left:242px;top:135px;color:#1a1a1a;font-size:7.9px">Проекционный вид 2 (1:1)</div>
<div class="a" style="left:213px;top:150px;width:7px;height:7px;background:#fff;border:1px solid #999"></div>
<div class="a" style="left:215px;top:153px;width:3px;height:1px;background:#000"></div>
<div class="a" style="left:216px;top:152px;width:1px;height:3px;background:#000"></div>
<div class="a" style="left:225px;top:146px;width:13px;height:13px;background:#00e8f8;border:1px solid #2a3fa0"></div>
<svg class="a" style="left:226px;top:147px" width="11" height="11" viewBox="0 0 11 11"><path d="M3,9 V2 M1.5,3.5 L3,1.5 L4.5,3.5 M3,9 H9" stroke="#0a2a80" stroke-width="1.2" fill="none"/><circle cx="9" cy="9" r="1.3" fill="#0a2a80"/></svg>
<div class="t" style="left:242px;top:149px;color:#1a1a1a;font-size:7.9px">(т) Проекционный вид 3 (1:1)</div>
<div class="a" style="left:213px;top:164px;width:7px;height:7px;background:#fff;border:1px solid #999"></div>
<div class="a" style="left:215px;top:167px;width:3px;height:1px;background:#000"></div>
<div class="a" style="left:216px;top:166px;width:1px;height:3px;background:#000"></div>
<div class="a" style="left:225px;top:160px;width:13px;height:13px;background:#00e000;border:1px solid #2a3fa0"></div>
<svg class="a" style="left:226px;top:161px" width="11" height="11" viewBox="0 0 11 11"><path d="M3,9 V2 M1.5,3.5 L3,1.5 L4.5,3.5 M3,9 H9" stroke="#0a2a80" stroke-width="1.2" fill="none"/><circle cx="9" cy="9" r="1.3" fill="#0a2a80"/></svg>
<div class="a" style="left:241px;top:160px;width:94px;height:13px;background:#0a246a"></div>
<div class="t" style="left:242px;top:163px;color:#fff;font-weight:bold;font-size:8px">Изометрия XYZ 4 (1:2)</div>
<div class="a" style="left:213px;top:178px;width:7px;height:7px;background:#fff;border:1px solid #999"></div>
<div class="a" style="left:215px;top:181px;width:3px;height:1px;background:#000"></div>
<div class="a" style="left:216px;top:180px;width:1px;height:3px;background:#000"></div>
<div class="a" style="left:225px;top:174px;width:13px;height:13px;background:#00e8f8;border:1px solid #2a3fa0"></div>
<svg class="a" style="left:226px;top:175px" width="11" height="11" viewBox="0 0 11 11"><path d="M3,9 V2 M1.5,3.5 L3,1.5 L4.5,3.5 M3,9 H9" stroke="#0a2a80" stroke-width="1.2" fill="none"/><circle cx="9" cy="9" r="1.3" fill="#0a2a80"/></svg>
<div class="t" style="left:242px;top:177px;color:#1a1a1a;font-size:7.9px">Разрез А-А (1:1)</div>
<div class="a" style="left:270px;top:130px;width:71px;height:32px;background:linear-gradient(#eaf1fb,#cbdcf3 45%,#b9d0ef 50%,#dce8f8 55%,#c4d8f2);border-radius:1px"></div>
<div class="a" style="left:272px;top:171px;width:135px;height:244px;background:rgba(0,0,0,0.25);filter:blur(1px)"></div>
<div class="a" style="left:270px;top:169px;width:134px;height:243px;background:#f9f8f7;border:1px solid #8e8e8e"></div>
<div class="a" style="left:271px;top:170px;width:19px;height:241px;background:#ebeae6;border-right:1px solid #dcdad4"></div>
<div class="t" style="left:292.5px;top:174.5px;color:#0e2a70;font-size:7.8px"><u>Д</u>ерево построения</div>
<div class="a" style="left:294px;top:189.5px;width:108px;height:1px;background:#c9c7c2"></div>
<div class="t" style="left:292.5px;top:196.0px;color:#0e2a70;font-size:7.8px"><u>П</u>араметры вида...</div>
<div class="t" style="left:292.5px;top:211.0px;color:#0e2a70;font-size:7.8px"><u>М</u>асштаб...</div>
<div class="t" style="left:292.5px;top:227.0px;color:#a8a8a8;font-size:7.8px">Проекционная связ<u>ь</u></div>
<div class="t" style="left:292.5px;top:242.0px;color:#a8a8a8;font-size:7.8px">П<u>а</u>раметры разрыва...</div>
<div class="t" style="left:292.5px;top:258.0px;color:#0e2a70;font-size:7.8px"><u>В</u>осстановить стили</div>
<div class="a" style="left:294px;top:272.0px;width:108px;height:1px;background:#c9c7c2"></div>
<div class="a" style="left:272px;top:276.0px;width:130px;height:14px;background:linear-gradient(#fffaf0,#fde8b8 40%,#f6c44c 68%,#fbe3a8);border:1px solid #f1dfb0;border-radius:1px"></div>
<div class="t" style="left:292.5px;top:279.0px;color:#0e2a70;font-size:7.8px"><u>Т</u>екущий</div>
<div class="t" style="left:292.5px;top:294.5px;color:#0e2a70;font-size:7.8px"><u>Ф</u>оновый</div>
<div class="t" style="left:292.5px;top:310.0px;color:#0e2a70;font-size:7.8px">По<u>г</u>асить</div>
<div class="a" style="left:294px;top:324.5px;width:108px;height:1px;background:#c9c7c2"></div>
<div class="t" style="left:292.5px;top:331.0px;color:#0e2a70;font-size:7.8px"><u>У</u>далить вид</div>
<div class="t" style="left:292.5px;top:346.5px;color:#0e2a70;font-size:7.8px"><u>Р</u>азрушить вид</div>
<div class="t" style="left:292.5px;top:362.0px;color:#a8a8a8;font-size:7.8px"><u>М</u>естный вид</div>
<div class="t" style="left:292.5px;top:377.5px;color:#a8a8a8;font-size:7.8px">Пока<u>з</u>ать разрывы</div>
<div class="a" style="left:294px;top:391.0px;width:108px;height:1px;background:#c9c7c2"></div>
<div class="t" style="left:292.5px;top:398.5px;color:#0e2a70;font-size:7.8px"><u>О</u>тношения</div>
<div class="a" style="left:396px;top:212px;border:3px solid transparent;border-left:3.5px solid #0e2a70;border-right:0"></div>
<div class="a" style="left:273.5px;top:171.5px;width:14px;height:14px;background:#fbd98a;border:1px solid #e8b04a;border-radius:1px"></div>
<svg class="a" style="left:275px;top:173px" width="12" height="12" viewBox="0 0 12 12"><path d="M2.5,6.5 L5,10 L9.5,2" stroke="#1f2f80" stroke-width="1.6" fill="none"/></svg>
<svg class="a" style="left:200.6px;top:37.6px" width="12.9" height="12.9" viewBox="0 0 14 14"><path d="M1.5,5 H6.5 M4,2.5 V7.5 M8.5,5 H13.5 M11,2.5 V7.5" stroke="#111" stroke-width="1.5"/><path d="M3.5,7.5 V13 M10.5,7.5 V13 M3.5,12.5 H10.5" stroke="#1030e0" stroke-width="1.3" fill="none"/></svg>
<svg class="a" style="left:264.6px;top:38.6px" width="12.9" height="12.9" viewBox="0 0 14 14"><path d="M3,2 H13 V10 L10,13 H1 V5 Z" fill="#5ec8f8" stroke="#3a7be8" stroke-width="1.2"/><path d="M1,5 H10 V13 M10,5 L13,2" stroke="#3a7be8" stroke-width="1" fill="none"/><path d="M3.5,6 V10 H8" stroke="#111" stroke-width="1.3" fill="none"/><circle cx="8.5" cy="10" r="1.2" fill="#111"/></svg>
<svg class="a" style="left:346.6px;top:38.6px" width="12.9" height="12.9" viewBox="0 0 14 14"><path d="M1,6 L5,3 H13 L9,6 Z M1,8.5 L5,5.5 H13 L9,8.5 Z M1,11 L5,8 H13 L9,11 Z" fill="#c8d4ff" stroke="#2340f0" stroke-width="1"/></svg>
<svg class="a" style="left:427.6px;top:38.6px" width="12.9" height="12.9" viewBox="0 0 14 14"><path d="M2.5,8.5 L6.5,4.5" stroke="#e02020" stroke-width="2.8" stroke-linecap="butt"/><path d="M6.5,4.5 A2.83,2.83 0 0 1 10.5,8.5" stroke="#e02020" stroke-width="2.8" fill="none"/><path d="M10.5,8.5 L6.5,12.5" stroke="#2040e0" stroke-width="2.8"/><path d="M9,13 H13.5" stroke="#111" stroke-width="1.3"/></svg>
<svg class="a" style="left:444.6px;top:38.6px" width="12.9" height="12.9" viewBox="0 0 14 14"><path d="M4.5,8.5 L8.5,4.5" stroke="#e02020" stroke-width="2.8"/><path d="M8.5,4.5 A2.83,2.83 0 0 1 12.5,8.5" stroke="#e02020" stroke-width="2.8" fill="none"/><path d="M12.5,8.5 L8.5,12.5" stroke="#2040e0" stroke-width="2.8"/><path d="M0.5,11.5 H5.5 M3,9 V14" stroke="#111" stroke-width="1.3"/></svg>
<svg class="a" style="left:464.6px;top:38.6px" width="12.9" height="12.9" viewBox="0 0 14 14"><path d="M2,8 L7,3 M4,10 L9,5" stroke="#555" stroke-width="1.2"/><path d="M6,12.5 H12 M9,7 V12.5" stroke="#222" stroke-width="1.3"/></svg>
<svg class="a" style="left:486.6px;top:38.6px" width="12.9" height="12.9" viewBox="0 0 14 14"><path d="M2,3 H12 M2,6 H12 M2,9 H12 M2,12 H12 M3,2 V13 M6,2 V13 M9,2 V13 M12,2 V13" stroke="#444" stroke-width="1" stroke-dasharray="1.4 1.6"/></svg>
<div class="a" style="left:502px;top:44px;border:2.5px solid transparent;border-top:3px solid #111"></div>
<svg class="a" style="left:515.6px;top:37.6px" width="12.9" height="12.9" viewBox="0 0 14 14"><path d="M4,2 V12 H13" stroke="#111" stroke-width="1.3" fill="none"/><path d="M2,4.5 L4,1.5 L6,4.5 M10.5,10 L13.5,12 L10.5,14" stroke="#111" stroke-width="1.1" fill="none"/><circle cx="4" cy="12" r="1.5" fill="#2040e0"/></svg>
<svg class="a" style="left:536.6px;top:38.6px" width="12.9" height="12.9" viewBox="0 0 14 14"><path d="M2,12 H7 V3 H12" stroke="#222" stroke-width="1.5" fill="none"/></svg>
<svg class="a" style="left:552.6px;top:38.6px" width="12.9" height="12.9" viewBox="0 0 14 14"><path d="M2,11 L12,3" stroke="#2a40d0" stroke-width="1.3"/><path d="M1,3 H5 M3,1 V5 M9,11 H13 M11,9 V13" stroke="#111" stroke-width="1.4"/><circle cx="3" cy="11" r="1.3" fill="#2a40d0"/><circle cx="12" cy="3" r="1.3" fill="#2a40d0"/></svg>
<svg class="a" style="left:572.6px;top:38.6px" width="12.9" height="12.9" viewBox="0 0 14 14"><text x="1" y="6" font-size="6" font-family="Liberation Sans" fill="#222">Y</text><text x="6" y="13" font-size="6" font-family="Liberation Sans" fill="#222">X</text><path d="M7,4 H13 M10,1 V7" stroke="#111" stroke-width="1.3"/></svg>
<svg class="a" style="left:202.6px;top:57.6px" width="12.9" height="12.9" viewBox="0 0 14 14"><path d="M2,1 H8 L11,4 V13 H2 Z" fill="#fff" stroke="#555" stroke-width="1"/><path d="M8,1 V4 H11" fill="#ddd" stroke="#555" stroke-width="0.8"/></svg>
<div class="a" style="left:217px;top:63px;border:2.5px solid transparent;border-top:3px solid #111"></div>
<svg class="a" style="left:224.6px;top:56.6px" width="12.9" height="12.9" viewBox="0 0 14 14"><path d="M1,5 H5 L6,6 H11 V12 H1 Z" fill="#e8c04a" stroke="#8a6a10" stroke-width="0.9"/><path d="M2.5,12 L4.5,8 H13.5 L11,12 Z" fill="#f6dc70" stroke="#8a6a10" stroke-width="0.9"/><path d="M7,4 Q9,0.5 12,3" stroke="#2050e0" stroke-width="1.5" fill="none"/><path d="M11,1 L13,3.5 L10.5,4.5 Z" fill="#2050e0"/></svg>
<svg class="a" style="left:241.6px;top:57.6px" width="12.9" height="12.9" viewBox="0 0 14 14"><rect x="1.5" y="1.5" width="11" height="11" fill="#c79a3a" stroke="#5a4010" stroke-width="1"/><rect x="3.5" y="2" width="7" height="5" fill="#fff3d0"/><rect x="4" y="9" width="6" height="3.5" fill="#ccc" stroke="#666" stroke-width="0.5"/></svg>
<svg class="a" style="left:261.6px;top:57.6px" width="12.9" height="12.9" viewBox="0 0 14 14"><path d="M3,5 V2 H10 V5" fill="#ddd" stroke="#999" stroke-width="0.8"/><rect x="1" y="5" width="12" height="6" rx="2" fill="#a8b0bc" stroke="#8a93a0" stroke-width="0.8"/><rect x="3" y="9" width="8" height="4" fill="#c8ccd4" stroke="#999" stroke-width="0.6"/></svg>
<svg class="a" style="left:276.6px;top:57.6px" width="12.9" height="12.9" viewBox="0 0 14 14"><path d="M2,1 H8 L11,4 V13 H2 Z" fill="#fff" stroke="#444" stroke-width="1"/><circle cx="7.5" cy="8" r="3" fill="#9bd" stroke="#233" stroke-width="1.2"/><path d="M9.5,10 L13,13.5" stroke="#2a3ad0" stroke-width="2"/></svg>
<svg class="a" style="left:292.6px;top:56.6px" width="12.9" height="12.9" viewBox="0 0 14 14"><rect x="6" y="1" width="7" height="10" fill="#f4f4f4" stroke="#777" stroke-width="0.8"/><path d="M9.5,1 V11 M6,6 H13" stroke="#999" stroke-width="0.7"/><path d="M2,7 V4 Q2,2 5,2" stroke="#2050e0" stroke-width="1.5" fill="none"/><rect x="1" y="10" width="7" height="3.5" fill="#fff" stroke="#333" stroke-width="0.8"/><rect x="2" y="11" width="4" height="1.5" fill="#e02020"/></svg>
<svg class="a" style="left:313.6px;top:57.6px" width="12.9" height="12.9" viewBox="0 0 14 14"><path d="M4,1 L8,9 M10,1 L6,9" stroke="#333" stroke-width="1.2"/><circle cx="4.5" cy="11" r="2" fill="none" stroke="#2a3ad0" stroke-width="1.3"/><circle cx="9.5" cy="11" r="2" fill="none" stroke="#2a3ad0" stroke-width="1.3"/></svg>
<svg class="a" style="left:329.6px;top:57.6px" width="12.9" height="12.9" viewBox="0 0 14 14"><rect x="1" y="1" width="7" height="8" fill="#fff" stroke="#556" stroke-width="0.9"/><rect x="5" y="5" width="8" height="8" fill="#dfe6ff" stroke="#556" stroke-width="0.9"/><path d="M2.5,3.5 H6 M6.5,8 H11 M6.5,10 H11" stroke="#3050c0" stroke-width="0.8"/></svg>
<svg class="a" style="left:344.6px;top:57.6px" width="12.9" height="12.9" viewBox="0 0 14 14"><rect x="1" y="3" width="9" height="10" fill="#c9ccd2" stroke="#9aa0a8" stroke-width="0.9"/><rect x="3.5" y="1.5" width="4" height="3" fill="#b0b4bc"/><rect x="6" y="6" width="7" height="7" fill="#e6e8ec" stroke="#9aa0a8" stroke-width="0.9"/></svg>
<svg class="a" style="left:365.6px;top:57.6px" width="12.9" height="12.9" viewBox="0 0 14 14"><path d="M12,1 L6.5,7" stroke="#2040c0" stroke-width="2"/><path d="M6,6 L8,8 L4,12 L1,12 L2,9 Z" fill="#f6e8b0" stroke="#333" stroke-width="0.9"/></svg>
<svg class="a" style="left:382.6px;top:57.6px" width="12.9" height="12.9" viewBox="0 0 14 14"><rect x="1.5" y="1.5" width="10" height="11" fill="#e6eaf8" stroke="#444" stroke-width="1"/><rect x="1.5" y="1.5" width="10" height="2.5" fill="#4a68d0"/><path d="M4,6 H9.5 M4,8 H9.5 M4,10 H9.5" stroke="#5a5aa8" stroke-width="0.9"/></svg>
<svg class="a" style="left:403.6px;top:57.6px" width="12.9" height="12.9" viewBox="0 0 14 14"><path d="M11,12 Q12,4 4,5" stroke="#1f55e0" stroke-width="2.2" fill="none"/><path d="M1,5 L6,1.5 L6,8.5 Z" fill="#1f55e0"/></svg>
<svg class="a" style="left:418.6px;top:57.6px" width="12.9" height="12.9" viewBox="0 0 14 14"><path d="M3,12 Q2,4 10,5" stroke="#a8b0bc" stroke-width="2.2" fill="none"/><path d="M13,5 L8,1.5 L8,8.5 Z" fill="#a8b0bc"/></svg>
<svg class="a" style="left:438.6px;top:56.6px" width="12.9" height="12.9" viewBox="0 0 14 14"><rect x="1" y="1" width="12" height="13" rx="1.5" fill="#2a7ae8" stroke="#0a2a90" stroke-width="1"/><rect x="3" y="4" width="8" height="6" fill="#7ed6ff"/><path d="M4,7 H10" stroke="#123" stroke-width="1"/></svg>
<svg class="a" style="left:454.6px;top:56.6px" width="12.9" height="12.9" viewBox="0 0 14 14"><rect x="4" y="4" width="9" height="10" fill="#2aa8b0" stroke="#245" stroke-width="0.9"/><rect x="5" y="7" width="5" height="6" fill="#fff" stroke="#333" stroke-width="0.6"/><text x="0" y="8" font-size="9" font-weight="bold" font-family="Liberation Sans" fill="#e8d000" stroke="#553" stroke-width="0.4">?</text></svg>
<svg class="a" style="left:469.6px;top:56.6px" width="14.7" height="12.9" viewBox="0 0 16 14"><text x="0" y="11" font-size="10.5" font-family="Liberation Sans" fill="#1a2aa0" letter-spacing="-0.5">f(x)</text></svg>
<svg class="a" style="left:490.6px;top:56.6px" width="12.9" height="12.9" viewBox="0 0 14 14"><path d="M1,1 L1,12 L4,9 L6.5,13.5 L8,12.5 L5.8,8.5 L9.5,8.5 Z" fill="#111"/><text x="7" y="10" font-size="10" font-weight="bold" font-family="Liberation Sans" fill="#1a2aa0">?</text></svg>
<svg class="a" style="left:521.6px;top:57.6px" width="12.9" height="12.9" viewBox="0 0 14 14"><circle cx="6" cy="6" r="4.3" fill="#dbe8ff" stroke="#2a3aa8" stroke-width="1.4"/><rect x="4" y="4" width="4" height="4" fill="#fff" stroke="#333" stroke-width="0.8"/><path d="M9,9 L13,13" stroke="#2a3aa8" stroke-width="2.2"/></svg>
<svg class="a" style="left:542.6px;top:57.6px" width="12.9" height="12.9" viewBox="0 0 14 14"><circle cx="6" cy="6" r="4.3" fill="#dbe8ff" stroke="#2a3aa8" stroke-width="1.4"/><path d="M9,9 L13,13" stroke="#2a3aa8" stroke-width="2.2"/><rect x="9" y="2" width="4" height="6" fill="#eee" stroke="#888" stroke-width="0.7"/></svg>
<svg class="a" style="left:558.6px;top:57.6px" width="12.9" height="12.9" viewBox="0 0 14 14"><circle cx="6" cy="6" r="4.3" fill="#dbe8ff" stroke="#2a3aa8" stroke-width="1.4"/><path d="M9,9 L13,13" stroke="#2a3aa8" stroke-width="2.2"/><path d="M6,3 V9 M4.5,4.5 L6,3 L7.5,4.5 M4.5,7.5 L6,9 L7.5,7.5" stroke="#111" stroke-width="0.9" fill="none"/></svg>
<svg class="a" style="left:578.6px;top:57.6px" width="12.9" height="12.9" viewBox="0 0 14 14"><circle cx="6" cy="6" r="4.3" fill="#dbe8ff" stroke="#2a3aa8" stroke-width="1.4"/><path d="M9,9 L13,13" stroke="#2a3aa8" stroke-width="2.2"/><path d="M3.5,5 H8.5 M6,2.5 V5 M3.5,7.5 H8.5" stroke="#111" stroke-width="1"/></svg>
<svg class="a" style="left:648.6px;top:57.6px" width="12.9" height="12.9" viewBox="0 0 14 14"><path d="M7,1 V13 M1,7 H13" stroke="#111" stroke-width="1.3"/><path d="M7,0.5 L5,3 H9 Z M7,13.5 L5,11 H9 Z M0.5,7 L3,5 V9 Z M13.5,7 L11,5 V9 Z" fill="#111"/></svg>
<svg class="a" style="left:669.6px;top:56.6px" width="12.9" height="12.9" viewBox="0 0 14 14"><rect x="1" y="2" width="12" height="3" fill="#333"/><rect x="2" y="5" width="3" height="9" fill="#444"/><rect x="8" y="5" width="3" height="9" fill="#555"/><rect x="2.5" y="7" width="2" height="2" fill="#ddd"/></svg>
<svg class="a" style="left:684.6px;top:56.6px" width="12.9" height="12.9" viewBox="0 0 14 14"><rect x="1" y="2" width="10" height="9" fill="#fff" stroke="#1a3ad8" stroke-width="1.3"/><rect x="1" y="2" width="10" height="2" fill="#1a3ad8"/><path d="M7,12 A3.5,3.5 0 1 1 12.5,9" stroke="#2a8ae8" stroke-width="1.4" fill="none"/></svg>
<div class="a" style="left:662px;top:47px;width:4px;height:1px;background:#223"></div>
<div class="a" style="left:662px;top:49px;border:2px solid transparent;border-top:2.5px solid #223"></div>
<div class="a" style="left:506px;top:66px;width:4px;height:1px;background:#223"></div>
<div class="a" style="left:506px;top:68px;border:2px solid transparent;border-top:2.5px solid #223"></div>
<div class="a" style="left:702px;top:66px;width:4px;height:1px;background:#223"></div>
<div class="a" style="left:702px;top:68px;border:2px solid transparent;border-top:2.5px solid #223"></div>
<svg class="a" style="left:197.1px;top:84.0px" width="11.9" height="11.9" viewBox="0 0 14 14"><circle cx="4.5" cy="4.5" r="3.3" fill="none" stroke="#222" stroke-width="1.2"/><path d="M6,10 L10,5 L13,12 Z" fill="none" stroke="#222" stroke-width="1.2"/></svg>
<div class="a" style="left:195px;top:95px;width:13px;height:13px;background:#d9e6f6;border:1px solid #8aa8d0;border-radius:2px"></div>
<svg class="a" style="left:197.0px;top:96.0px" width="11.0" height="11.0" viewBox="0 0 13 13"><path d="M3,10 L10,3" stroke="#222" stroke-width="1.2"/><path d="M1,12 L4,8 L5,11 Z M12,1 L9,5 L8,2 Z" fill="#111"/></svg>
<svg class="a" style="left:197.0px;top:108.0px" width="11.0" height="11.0" viewBox="0 0 13 13"><path d="M6,7 L2,12" stroke="#d89020" stroke-width="2.4"/><path d="M4,3 L9,1 L12,4 L10,6 L8,5 L7,8 L4,6 Z" fill="#333"/></svg>
<svg class="a" style="left:197.0px;top:120.0px" width="11.0" height="11.0" viewBox="0 0 13 13"><rect x="2" y="1" width="5" height="5" fill="#fff" stroke="#2030c0" stroke-width="1.3"/><path d="M4.5,6 V10 M1,11 H8 M8,11 L12,6" stroke="#111" stroke-width="1.3"/></svg>
<svg class="a" style="left:197.0px;top:132.0px" width="11.0" height="11.0" viewBox="0 0 13 13"><path d="M2,8 L7,3 M4,10 L9,5" stroke="#444" stroke-width="1.2"/><path d="M6,12 H12 M9,7 V12" stroke="#111" stroke-width="1.3"/></svg>
<svg class="a" style="left:197.0px;top:144.0px" width="11.0" height="11.0" viewBox="0 0 13 13"><path d="M1.5,12 L6.5,2 L11.5,12" stroke="#222" stroke-width="1.5" fill="none"/></svg>
<svg class="a" style="left:197.0px;top:156.0px" width="11.0" height="11.0" viewBox="0 0 13 13"><path d="M1,5 H7 M4,2 V8" stroke="#10b010" stroke-width="1.8"/><path d="M6,11 L10,3" stroke="#222" stroke-width="1"/><path d="M7,11 H12" stroke="#e01010" stroke-width="1.8"/></svg>
<svg class="a" style="left:197.0px;top:168.0px" width="11.0" height="11.0" viewBox="0 0 13 13"><rect x="1" y="2" width="11" height="9" fill="#e8eef8" stroke="#333" stroke-width="1.2"/><rect x="3" y="4" width="5" height="3" fill="#3050d0"/></svg>
<svg class="a" style="left:197.0px;top:180.0px" width="11.0" height="11.0" viewBox="0 0 13 13"><path d="M2,1 H8 L11,4 V12 H2 Z" fill="#ddd" stroke="#333" stroke-width="1.2"/><path d="M4,5 H9 M4,7 H9 M4,9 H9" stroke="#555" stroke-width="0.8"/></svg>
<svg class="a" style="left:196.1px;top:199.1px" width="11.9" height="11.9" viewBox="0 0 14 14"><path d="M1,5 V12 M13,5 V12 M1,9 H13" stroke="#222" stroke-width="1.3"/><path d="M8,0 L4,6 H7 L5,11 L11,4 H8 Z" fill="#f0d020" stroke="#886" stroke-width="0.4"/></svg>
<svg class="a" style="left:196.1px;top:214.1px" width="11.9" height="11.9" viewBox="0 0 14 14"><path d="M1.5,3 V12 M12.5,3 V12 M1.5,3.5 H12.5" stroke="#222" stroke-width="1.3" fill="none"/><path d="M1.5,3.5 L4,2 V5 Z M12.5,3.5 L10,2 V5 Z" fill="#222"/></svg>
<svg class="a" style="left:197.0px;top:229.0px" width="11.0" height="11.0" viewBox="0 0 13 13"><circle cx="6.5" cy="6.5" r="5" fill="none" stroke="#2040e0" stroke-width="1.6"/><path d="M3.5,9.5 L9.5,3.5" stroke="#111" stroke-width="1.2"/><path d="M10,3 L6.5,4 L9,6.5 Z M3,10 L6.5,9 L4,6.5 Z" fill="#111"/></svg>
<svg class="a" style="left:197.0px;top:245.0px" width="11.0" height="11.0" viewBox="0 0 13 13"><path d="M3,4 Q9,2 11,9" stroke="#2040e0" stroke-width="1.5" fill="none"/><path d="M1,12 L7,5" stroke="#111" stroke-width="1.2"/><path d="M7.5,4.5 L4.5,5.5 L6.5,7.5 Z" fill="#111"/><rect x="10" y="10" width="2.5" height="2.5" fill="#111"/></svg>
<svg class="a" style="left:197.0px;top:260.0px" width="11.0" height="11.0" viewBox="0 0 13 13"><path d="M1.5,12 L6,2 L12,12 Z" fill="none" stroke="#222" stroke-width="1.3"/><path d="M8,12 A4,4 0 0 0 10,8" stroke="#222" stroke-width="1" fill="none"/></svg>
<svg class="a" style="left:197.0px;top:276.0px" width="11.0" height="11.0" viewBox="0 0 13 13"><path d="M1.5,2 V12 M11.5,2 V12 M1.5,3 Q6.5,6 11.5,3" stroke="#222" stroke-width="1.3" fill="none"/><path d="M1.5,11 Q6.5,7 11.5,11" stroke="#2040e0" stroke-width="1.5" fill="none"/></svg>
<svg class="a" style="left:197.0px;top:291.0px" width="11.0" height="11.0" viewBox="0 0 13 13"><path d="M5,1 V7 M5,4 H10 M3,7 H11" stroke="#222" stroke-width="1.1"/><path d="M1,9.5 H12 M1,12 H12" stroke="#2040e0" stroke-width="1.6" stroke-dasharray="2 0.6"/></svg>
<div class="a" style="left:193px;top:86px;width:1px;height:6px;background:repeating-linear-gradient(#6b8cc0 0 1px,transparent 1px 2px)"></div>
<div class="a" style="left:193px;top:98px;width:1px;height:6px;background:repeating-linear-gradient(#6b8cc0 0 1px,transparent 1px 2px)"></div>
<div class="a" style="left:193px;top:110px;width:1px;height:6px;background:repeating-linear-gradient(#6b8cc0 0 1px,transparent 1px 2px)"></div>
<div class="a" style="left:193px;top:122px;width:1px;height:6px;background:repeating-linear-gradient(#6b8cc0 0 1px,transparent 1px 2px)"></div>
<div class="a" style="left:193px;top:134px;width:1px;height:6px;background:repeating-linear-gradient(#6b8cc0 0 1px,transparent 1px 2px)"></div>
<div class="a" style="left:193px;top:146px;width:1px;height:6px;background:repeating-linear-gradient(#6b8cc0 0 1px,transparent 1px 2px)"></div>
<div class="a" style="left:193px;top:158px;width:1px;height:6px;background:repeating-linear-gradient(#6b8cc0 0 1px,transparent 1px 2px)"></div>
<div class="a" style="left:193px;top:170px;width:1px;height:6px;background:repeating-linear-gradient(#6b8cc0 0 1px,transparent 1px 2px)"></div>
<div class="a" style="left:193px;top:182px;width:1px;height:6px;background:repeating-linear-gradient(#6b8cc0 0 1px,transparent 1px 2px)"></div>
<div class="a" style="left:193px;top:194px;width:1px;height:6px;background:repeating-linear-gradient(#6b8cc0 0 1px,transparent 1px 2px)"></div>
<div class="a" style="left:193px;top:206px;width:1px;height:6px;background:repeating-linear-gradient(#6b8cc0 0 1px,transparent 1px 2px)"></div>
<div class="a" style="left:193px;top:218px;width:1px;height:6px;background:repeating-linear-gradient(#6b8cc0 0 1px,transparent 1px 2px)"></div>
<div class="a" style="left:193px;top:230px;width:1px;height:6px;background:repeating-linear-gradient(#6b8cc0 0 1px,transparent 1px 2px)"></div>
<div class="a" style="left:193px;top:242px;width:1px;height:6px;background:repeating-linear-gradient(#6b8cc0 0 1px,transparent 1px 2px)"></div>
<div class="a" style="left:193px;top:254px;width:1px;height:6px;background:repeating-linear-gradient(#6b8cc0 0 1px,transparent 1px 2px)"></div>
<div class="a" style="left:193px;top:266px;width:1px;height:6px;background:repeating-linear-gradient(#6b8cc0 0 1px,transparent 1px 2px)"></div>
<div class="a" style="left:193px;top:278px;width:1px;height:6px;background:repeating-linear-gradient(#6b8cc0 0 1px,transparent 1px 2px)"></div>
<div class="a" style="left:193px;top:290px;width:1px;height:6px;background:repeating-linear-gradient(#6b8cc0 0 1px,transparent 1px 2px)"></div>
<svg class="a" style="left:274.1px;top:132.1px" width="11.9" height="11.9" viewBox="0 0 14 14"><path d="M1,2 H4 L3,5 Z" fill="#1a2a9a"/><path d="M3,4 Q6,1 10,4 L12,6" stroke="#666" stroke-width="2" fill="none"/><path d="M6,10 L8,12.5 L12.5,7" stroke="#e82020" stroke-width="1.8" fill="none"/></svg>
<svg class="a" style="left:289.1px;top:132.1px" width="11.9" height="11.9" viewBox="0 0 14 14"><path d="M4,6 V4.5 A3,3 0 0 1 10,4.5 V6" stroke="#1a50c0" stroke-width="1.6" fill="none"/><rect x="2" y="6" width="10" height="7" rx="1" fill="#1a80e0" stroke="#0a3a90" stroke-width="0.8"/><rect x="6" y="8.5" width="2" height="2" fill="#0a2a60"/></svg>
<svg class="a" style="left:305.1px;top:132.1px" width="11.9" height="11.9" viewBox="0 0 14 14"><path d="M7,1.5 A4,4 0 0 1 9.5,9 V11 H4.5 V9 A4,4 0 0 1 7,1.5 Z" fill="#60d8c8" stroke="#1a5a58" stroke-width="0.9"/><rect x="5" y="11" width="4" height="2" fill="#444"/></svg>
<svg class="a" style="left:321.1px;top:132.1px" width="11.9" height="11.9" viewBox="0 0 14 14"><circle cx="6" cy="6" r="4.3" fill="#eef2f8" stroke="#a8b0c0" stroke-width="1.4"/><path d="M9,9 L13,13" stroke="#a8b0c0" stroke-width="2.2"/><path d="M4,8 L8,4" stroke="#b8c0cc" stroke-width="1"/></svg>
<svg class="a" style="left:274.1px;top:148.1px" width="11.9" height="11.9" viewBox="0 0 14 14"><rect x="1" y="6" width="10" height="7" fill="#fff" stroke="#333" stroke-width="1.2"/><circle cx="5" cy="9" r="1.6" fill="#3a60e0"/><path d="M3,1 L7,5 M7,1 L3,5" stroke="#e02020" stroke-width="1.3"/><path d="M8,5 L12,1.5 L13,4 Z" fill="#1a40d0"/><rect x="9" y="3" width="3" height="3" fill="#20d0e0"/></svg>
<svg class="a" style="left:289.1px;top:148.1px" width="11.9" height="11.9" viewBox="0 0 14 14"><rect x="2" y="1" width="10" height="12" fill="#d8dce4" stroke="#a8acb4" stroke-width="1"/><path d="M2,5 H12 M2,9 H12 M5,9 V13 M9,9 V13" stroke="#b0b4bc" stroke-width="0.9"/><rect x="4" y="2.5" width="6" height="1.5" fill="#a0a4ac"/></svg>
<svg class="a" style="left:305.1px;top:148.1px" width="11.9" height="11.9" viewBox="0 0 14 14"><path d="M4,2 Q1,7 4,12 M10,2 Q13,7 10,12" stroke="#a8b0bc" stroke-width="2" fill="none"/><path d="M6,3 V11 M8,3 V11" stroke="#b8bec8" stroke-width="1.2"/></svg>
<svg class="a" style="left:275.1px;top:277.1px" width="11.9" height="11.9" viewBox="0 0 14 14"><path d="M1,2 H4 L3,5 Z" fill="#1a2a9a"/><path d="M3,4 Q6,1 10,4 L12,6" stroke="#666" stroke-width="2" fill="none"/><path d="M6,10 L8,12.5 L12.5,7" stroke="#e82020" stroke-width="1.8" fill="none"/></svg>
<svg class="a" style="left:275.1px;top:292.1px" width="11.9" height="11.9" viewBox="0 0 14 14"><path d="M4,6 V4.5 A3,3 0 0 1 10,4.5 V6" stroke="#1a50c0" stroke-width="1.6" fill="none"/><rect x="2" y="6" width="10" height="7" rx="1" fill="#1a80e0" stroke="#0a3a90" stroke-width="0.8"/><rect x="6" y="8.5" width="2" height="2" fill="#0a2a60"/></svg>
<svg class="a" style="left:275.1px;top:308.1px" width="11.9" height="11.9" viewBox="0 0 14 14"><path d="M7,1.5 A4,4 0 0 1 9.5,9 V11 H4.5 V9 A4,4 0 0 1 7,1.5 Z" fill="#60d8c8" stroke="#1a5a58" stroke-width="0.9"/><rect x="5" y="11" width="4" height="2" fill="#444"/></svg>
<svg class="a" style="left:275.1px;top:344.1px" width="11.9" height="11.9" viewBox="0 0 14 14"><rect x="1" y="6" width="10" height="7" fill="#fff" stroke="#333" stroke-width="1.2"/><circle cx="5" cy="9" r="1.6" fill="#3a60e0"/><path d="M3,1 L7,5 M7,1 L3,5" stroke="#e02020" stroke-width="1.3"/><path d="M8,5 L12,1.5 L13,4 Z" fill="#1a40d0"/><rect x="9" y="3" width="3" height="3" fill="#20d0e0"/></svg>
<svg class="a" style="left:275.1px;top:225.1px" width="11.9" height="11.9" viewBox="0 0 14 14"><rect x="2" y="1" width="10" height="12" fill="#d8dce4" stroke="#a8acb4" stroke-width="1"/><path d="M2,5 H12 M2,9 H12 M5,9 V13 M9,9 V13" stroke="#b0b4bc" stroke-width="0.9"/><rect x="4" y="2.5" width="6" height="1.5" fill="#a0a4ac"/></svg>
<svg class="a" style="left:275.1px;top:240.1px" width="11.9" height="11.9" viewBox="0 0 14 14"><path d="M4,2 Q1,7 4,12 M10,2 Q13,7 10,12" stroke="#a8b0bc" stroke-width="2" fill="none"/><path d="M6,3 V11 M8,3 V11" stroke="#b8bec8" stroke-width="1.2"/></svg>
<svg class="a" style="left:310.5px;top:285.5px" width="12" height="16" viewBox="0 0 12 16"><path d="M1,1 L1,13 L4,10 L6.5,15 L8.5,14 L6,9 L10,9 Z" fill="#fff" stroke="#000" stroke-width="1"/></svg>
</body></html>
